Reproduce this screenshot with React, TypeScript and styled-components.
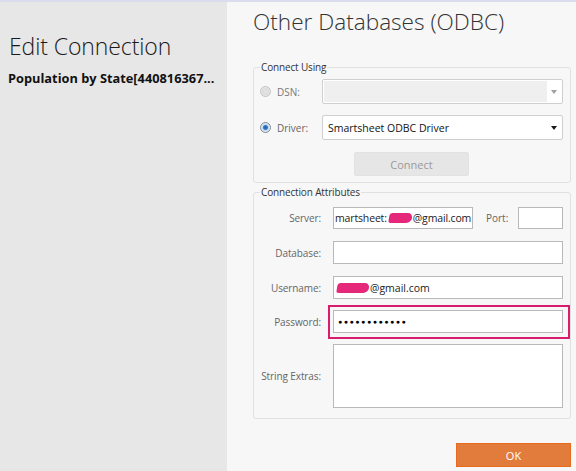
import React from "react";
import styled, { createGlobalStyle } from "styled-components";

const Global = createGlobalStyle`
  html, body { margin: 0; padding: 0; }
  body { width: 576px; height: 471px; overflow: hidden; font-family: "Open Sans", "Noto Sans", sans-serif; }
  * { box-sizing: border-box; }
`;

const Frame = styled.div`
  width: 576px;
  height: 471px;
  display: flex;
  flex-direction: column;
  border-top: 2px solid #dcdcef;
`;

const Body = styled.div`
  flex: 1;
  display: flex;
`;

const Side = styled.div`
  width: 227px;
  background: #e7e7e7;
  padding: 28px 0 0 9px;
`;

const SideTitle = styled.h1`
  margin: 0;
  font-weight: 300;
  font-size: 23px;
  line-height: 32px;
  color: #1a1a1a;
  letter-spacing: -0.1px;
`;

const SideSub = styled.div`
  margin: 7px 0 0 -1px;
  font-weight: 700;
  font-size: 12.8px;
  color: #111;
  white-space: nowrap;
`;

const Main = styled.div`
  flex: 1;
  background: #f7f7f7;
  padding: 4px 5px 0 26px;
  display: flex;
  flex-direction: column;
`;

const MainTitle = styled.h2`
  margin: 0;
  font-weight: 300;
  font-size: 22.6px;
  color: #333;
`;

const Group = styled.fieldset<{ $top: number; $h: number }>`
  margin: ${(p) => p.$top}px 0 0 0;
  height: ${(p) => p.$h}px;
  border: 1px solid #e1e1e1;
  border-radius: 3px;
  padding: 0 7px 0 6px;
  min-width: 0;
`;

const Legend = styled.legend`
  font-size: 10px;
  letter-spacing: -0.15px;
  color: #333;
  padding: 0 1px;
  margin-left: 0;
  line-height: 12px;
`;

const RadioRow = styled.div<{ $mt: number }>`
  display: flex;
  align-items: center;
  height: 25px;
  margin-top: ${(p) => p.$mt}px;
`;

const Radio = styled.span<{ $on?: boolean }>`
  width: 11px;
  height: 11px;
  border-radius: 50%;
  border: 1px solid ${(p) => (p.$on ? "#7d8a99" : "#c2c2c2")};
  background: ${(p) =>
    p.$on
      ? "radial-gradient(circle, #1b5fae 0, #2f7fd0 2px, #c9d7e8 3px, #f2f4f7 5px)"
      : "radial-gradient(circle, #e6e6e6 0, #dcdcdc 3px, #eeeeee 5px)"};
  flex: none;
`;

const RadioLabel = styled.span<{ $dim?: boolean }>`
  width: 45px;
  margin-left: 6px;
  font-size: 10px;
  color: ${(p) => (p.$dim ? "#777" : "#666")};
`;

const Select = styled.div`
  flex: 1;
  height: 25px;
  border: 1px solid #cfcfcf;
  border-radius: 2px;
  background: #fff;
  display: flex;
  align-items: center;
  padding: 1px;
`;

const SelectValue = styled.div<{ $disabled?: boolean }>`
  flex: 1;
  align-self: stretch;
  background: ${(p) => (p.$disabled ? "#efefef" : "#fff")};
  font-size: 10.5px;
  color: #111;
  display: flex;
  align-items: center;
  padding-left: 4px;
`;

const Arrow = styled.span<{ $dim?: boolean }>`
  width: 14px;
  display: flex;
  justify-content: center;
  &::before {
    content: "";
    border-left: 3.5px solid transparent;
    border-right: 3.5px solid transparent;
    border-top: 4px solid ${(p) => (p.$dim ? "#a0a0a0" : "#1a1a1a")};
  }
`;

const ConnectBtn = styled.div`
  width: 115px;
  height: 24px;
  margin: 12px auto 0;
  background: #e6e6e6;
  border: 1px solid #e2e2e2;
  border-radius: 2px;
  color: #9a9a9a;
  font-size: 11px;
  display: flex;
  align-items: center;
  justify-content: center;
`;

const Form = styled.div`
  display: grid;
  grid-template-columns: 61px 1fr;
  column-gap: 12px;
  align-items: center;
  margin-top: 9px;
`;

const FieldLabel = styled.div<{ $h: number; $mt?: number }>`
  text-align: right;
  font-size: 10px;
  letter-spacing: -0.1px;
  color: #666;
  height: ${(p) => p.$h}px;
  margin-top: ${(p) => p.$mt ?? 0}px;
  display: flex;
  align-items: center;
  justify-content: flex-end;
  white-space: nowrap;
`;

const Cell = styled.div<{ $mt?: number }>`
  margin-top: ${(p) => p.$mt ?? 0}px;
  display: flex;
  align-items: center;
  position: relative;
`;

const Input = styled.div<{ $w?: number; $h?: number; $tight?: boolean }>`
  ${(p) => (p.$w ? `width: ${p.$w}px; flex: none;` : "flex: 1;")}
  height: ${(p) => p.$h ?? 23}px;
  border: 1px solid #b9b9b9;
  background: #fff;
  font-size: 10.5px;
  letter-spacing: ${(p) => (p.$tight ? "-0.15px" : "0")};
  color: #222;
  display: flex;
  align-items: center;
  overflow: hidden;
  white-space: nowrap;
  padding: 0 1px;
`;

const PortLabel = styled.span`
  font-size: 10px;
  color: #666;
  margin: 0 0 0 13px;
  width: 32px;
`;

const Blob = styled.span<{ $w: number }>`
  display: inline-block;
  flex: none;
  width: ${(p) => p.$w}px;
  height: 10px;
  background: #e6287b;
  border-radius: 3px 6px 6px 3px;
  transform: skewX(-10deg);
  margin: 0 1px 0 2px;
`;

const Dots = styled.span`
  font-size: 7px;
  letter-spacing: 1.55px;
  color: #000;
  padding-left: 3px;
`;

const Highlight = styled.div`
  position: absolute;
  left: -5px;
  right: -7px;
  top: -5px;
  bottom: -6px;
  border: 2px solid #d91d6e;
  pointer-events: none;
`;

const Footer = styled.div`
  display: flex;
  justify-content: flex-end;
  margin-top: 24px;
`;

const OkBtn = styled.div`
  width: 115px;
  height: 24px;
  background: #e27c3c;
  border: 1px solid #e66b1e;
  color: #fff;
  font-size: 11px;
  display: flex;
  align-items: center;
  justify-content: center;
`;

export default function App() {
  return (
    <>
      <Global />
      <Frame>
        <Body>
          <Side>
            <SideTitle>Edit Connection</SideTitle>
            <SideSub>Population by State[440816367...</SideSub>
          </Side>
          <Main>
            <MainTitle>Other Databases (ODBC)</MainTitle>
            <Group $top={24} $h={122}>
              <Legend>Connect Using</Legend>
              <RadioRow $mt={6}>
                <Radio />
                <RadioLabel $dim>DSN:</RadioLabel>
                <Select>
                  <SelectValue $disabled />
                  <Arrow $dim />
                </Select>
              </RadioRow>
              <RadioRow $mt={11}>
                <Radio $on />
                <RadioLabel>Driver:</RadioLabel>
                <Select>
                  <SelectValue>Smartsheet ODBC Driver</SelectValue>
                  <Arrow />
                </Select>
              </RadioRow>
              <ConnectBtn>Connect</ConnectBtn>
            </Group>
            <Group $top={3} $h={233}>
              <Legend>Connection Attributes</Legend>
              <Form>
                <FieldLabel $h={22}>Server:</FieldLabel>
                <Cell>
                  <Input $w={140} $h={22} $tight>
                    martsheet:<Blob $w={23} />@gmail.com
                  </Input>
                  <PortLabel>Port:</PortLabel>
                  <Input $h={22} />
                </Cell>
                <FieldLabel $h={23} $mt={12}>Database:</FieldLabel>
                <Cell $mt={12}>
                  <Input />
                </Cell>
                <FieldLabel $h={23} $mt={12}>Username:</FieldLabel>
                <Cell $mt={12}>
                  <Input>
                    <Blob $w={32} />@gmail.com
                  </Input>
                </Cell>
                <FieldLabel $h={23} $mt={11}>Password:</FieldLabel>
                <Cell $mt={11}>
                  <Input>
                    <Dots>●●●●●●●●●●●●</Dots>
                  </Input>
                  <Highlight />
                </Cell>
                <FieldLabel $h={64} $mt={11}>String Extras:</FieldLabel>
                <Cell $mt={11}>
                  <Input $h={64} />
                </Cell>
              </Form>
            </Group>
            <Footer>
              <OkBtn>OK</OkBtn>
            </Footer>
          </Main>
        </Body>
      </Frame>
    </>
  );
}
